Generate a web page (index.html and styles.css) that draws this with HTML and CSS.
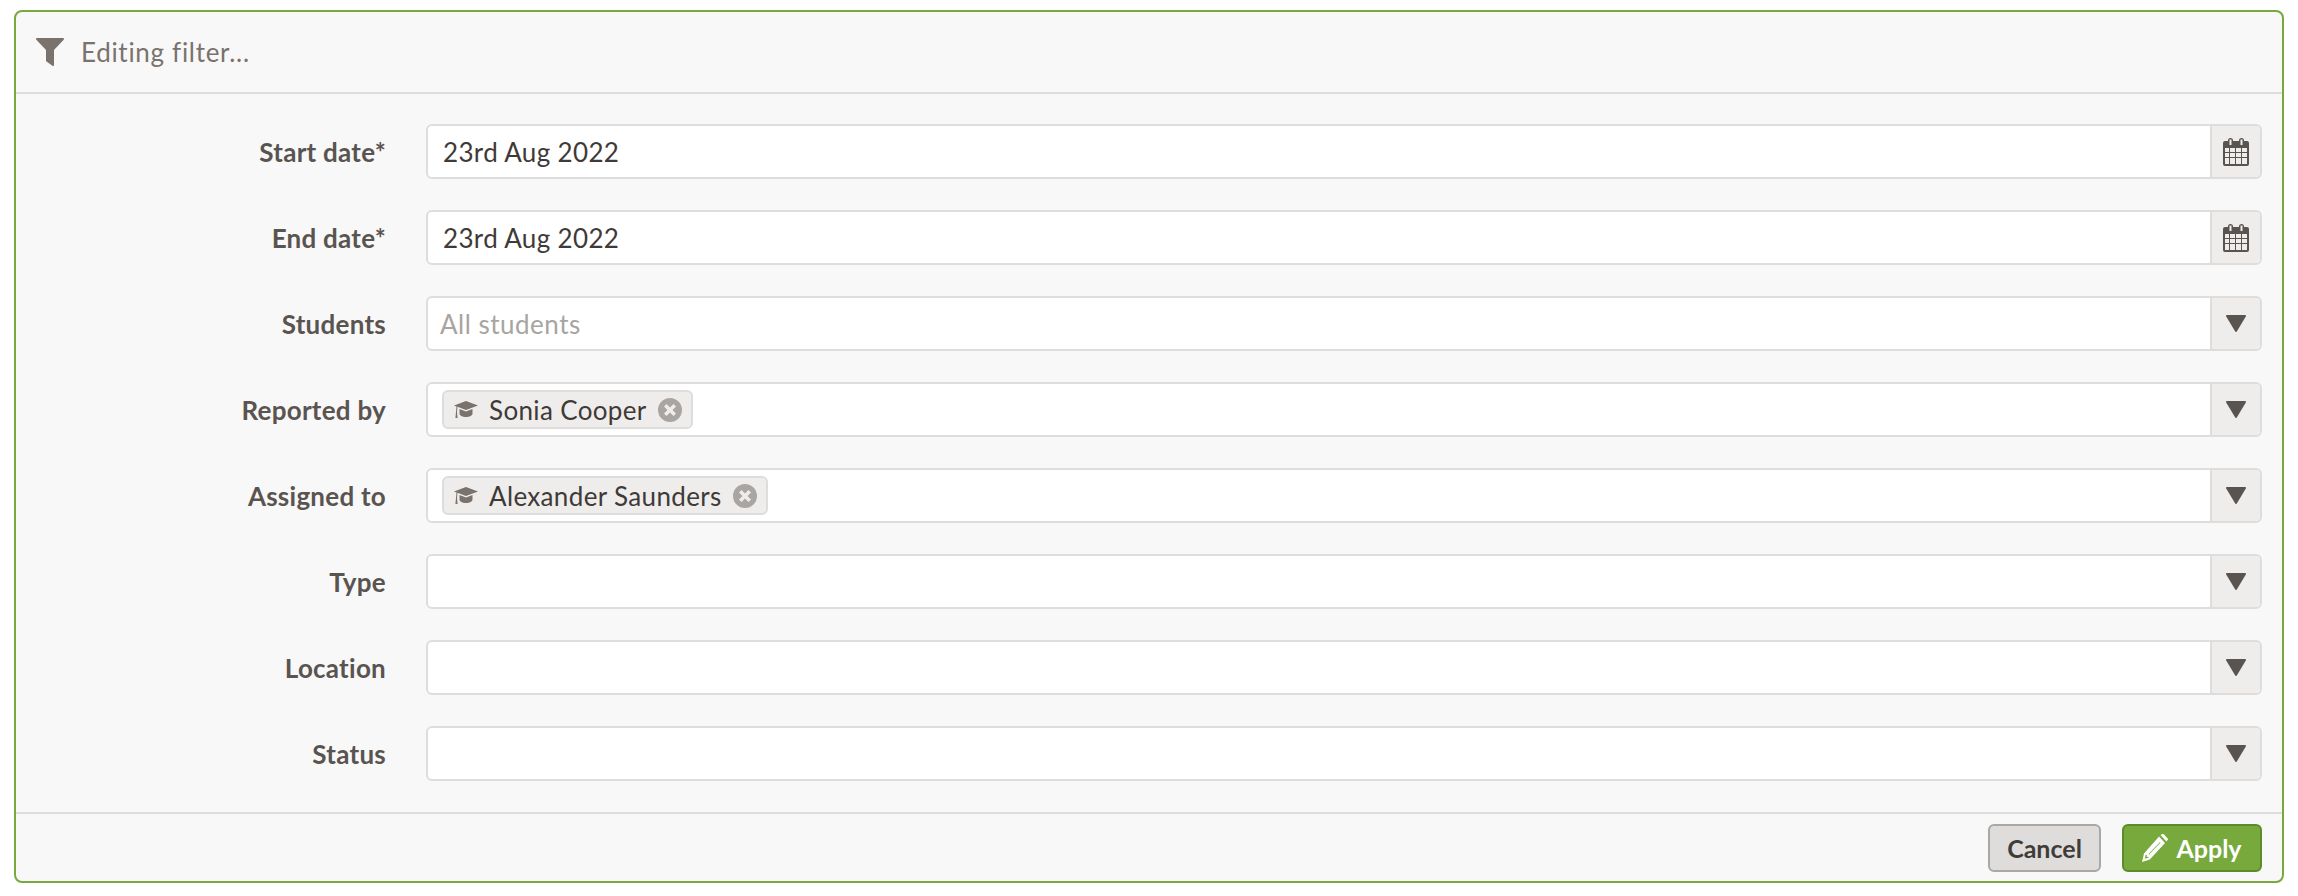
FILE: index.html
```html
<!DOCTYPE html>
<html>
	<head>
		<meta charset="utf-8" />
		<title>Editing filter</title>
		<link rel="stylesheet" href="styles.css">
	</head>
	<body>
		<svg class="defs" width="0" height="0">
			<symbol id="i-cal" viewBox="0 0 26 28">
				<path fill-rule="evenodd" d="M2 3H5V2.500a2.500 2.500 0 0 1 5 0V3H16V2.500a2.500 2.500 0 0 1 5 0V3H24a2 2 0 0 1 2 2V26a2 2 0 0 1-2 2H2a2 2 0 0 1-2-2V5a2 2 0 0 1 2-2ZM6.500 1.500V7H8.500V1.500ZM17.500 1.500V7H19.500V1.500ZM2 10V14H6V10ZM7 10V14H12V10ZM13 10V14H18V10ZM19 10V14H24V10ZM2 15V19H6V15ZM7 15V19H12V15ZM13 15V19H18V15ZM19 15V19H24V15ZM2 20V26H6V20ZM7 20V26H12V20ZM13 20V26H18V20ZM19 20V26H24V20Z"/>
			</symbol>
			<symbol id="i-down" viewBox="0 0 20 17">
				<path d="M1 0H19a1 1 0 0 1 .8 1.500L10.800 16.500a1 1 0 0 1-1.600 0L.2 1.500A1 1 0 0 1 1 0Z"/>
			</symbol>
			<symbol id="i-cap" viewBox="0 0 24 20">
				<path d="M12 1 24 5.500 12 10 3.500 6.800 3 12 3.600 18H1.400L2 12 2.500 6.400 0 5.500Z"/>
				<path d="M5.500 9 12 11.500 18.500 9V13.500C18.500 15.500 15.500 17 12 17S5.500 15.500 5.500 13.500Z"/>
			</symbol>
			<symbol id="i-x" viewBox="0 0 24 24">
				<path fill-rule="evenodd" d="M12 0a12 12 0 1 1 0 24a12 12 0 0 1 0-24ZM8.500 6 6 8.500 9.500 12 6 15.500 8.500 18 12 14.500 15.500 18 18 15.500 14.500 12 18 8.500 15.500 6 12 9.500Z"/>
			</symbol>
		</svg>
		<form class="panel">
			<div class="panel-head">
				<svg class="ico-filter" viewBox="0 0 28 28"><path d="M1 0H27a1 1 0 0 1 .7 1.700L18 12V27a1 1 0 0 1-1.600 .8L10.500 23.500a1 1 0 0 1-.5-.8V12L.3 1.700A1 1 0 0 1 1 0Z"/></svg>
				<span>Editing filter...</span>
			</div>
			<div class="panel-body">
				<div class="row">
					<label class="row-label">Start date*</label>
					<div class="field">
						<div class="field-main date">23rd Aug 2022</div>
						<div class="addon"><svg class="ico-cal"><use href="#i-cal"/></svg></div>
					</div>
				</div>
				<div class="row">
					<label class="row-label">End date*</label>
					<div class="field">
						<div class="field-main date">23rd Aug 2022</div>
						<div class="addon"><svg class="ico-cal"><use href="#i-cal"/></svg></div>
					</div>
				</div>
				<div class="row">
					<label class="row-label">Students</label>
					<div class="field">
						<div class="field-main placeholder">All students</div>
						<div class="addon"><svg class="ico-down"><use href="#i-down"/></svg></div>
					</div>
				</div>
				<div class="row">
					<label class="row-label">Reported by</label>
					<div class="field">
						<div class="field-main chips">
							<span class="chip">
								<svg class="ico-cap"><use href="#i-cap"/></svg>
								Sonia Cooper
								<svg class="ico-x"><use href="#i-x"/></svg>
							</span>
						</div>
						<div class="addon"><svg class="ico-down"><use href="#i-down"/></svg></div>
					</div>
				</div>
				<div class="row">
					<label class="row-label">Assigned to</label>
					<div class="field">
						<div class="field-main chips">
							<span class="chip">
								<svg class="ico-cap"><use href="#i-cap"/></svg>
								Alexander Saunders
								<svg class="ico-x"><use href="#i-x"/></svg>
							</span>
						</div>
						<div class="addon"><svg class="ico-down"><use href="#i-down"/></svg></div>
					</div>
				</div>
				<div class="row">
					<label class="row-label">Type</label>
					<div class="field">
						<div class="field-main"></div>
						<div class="addon"><svg class="ico-down"><use href="#i-down"/></svg></div>
					</div>
				</div>
				<div class="row">
					<label class="row-label">Location</label>
					<div class="field">
						<div class="field-main"></div>
						<div class="addon"><svg class="ico-down"><use href="#i-down"/></svg></div>
					</div>
				</div>
				<div class="row">
					<label class="row-label">Status</label>
					<div class="field">
						<div class="field-main"></div>
						<div class="addon"><svg class="ico-down"><use href="#i-down"/></svg></div>
					</div>
				</div>
			</div>
			<div class="panel-foot">
				<button type="button" class="btn btn-cancel">Cancel</button>
				<button type="button" class="btn btn-apply">
					<svg class="ico-pencil" viewBox="0 0 26 28"><path fill-rule="evenodd" d="M18.500 1 19.800.3a1.500 1.500 0 0 1 2 0L25.500 4.300a1.500 1.500 0 0 1 0 2L24.300 7.500ZM17 2.500 23 9 7.800 25.500 0 28 2 19.500ZM6.500 20 7 20.500 18.500 8.500 18 8ZM3.800 20.500 2.800 24.700 6.800 23.500 6.200 22.700 4.600 23.100 5 21.400Z"/></svg>
					Apply
				</button>
			</div>
		</form>
	</body>
</html>
```

FILE: styles.css
```css
* {
	box-sizing: border-box;
}

body {
	margin: 0;
	padding: 10px 14px 0 14px;
	background: #fff;
	font-family: Lato, "Open Sans", sans-serif;
	font-size: 26px;
	letter-spacing: 0.35px;
	color: #3f3a37;
}

.defs {
	position: absolute;
}

.panel {
	border: 2px solid #78a93c;
	border-radius: 8px;
	background: #f8f8f8;
	height: 873px;
	display: flex;
	flex-direction: column;
}

.panel-head {
	height: 82px;
	border-bottom: 2px solid #dfdddb;
	padding-left: 20px;
	display: flex;
	align-items: center;
	gap: 17px;
	letter-spacing: 0.7px;
	color: #7a726d;
}

.ico-filter {
	width: 28px;
	height: 28px;
	fill: #7a726d;
}

.panel-body {
	flex: 1;
	padding: 30px 20px 0 0;
	display: flex;
	flex-direction: column;
	gap: 31px;
}

.row {
	display: flex;
	align-items: center;
	height: 55px;
}

.row-label {
	width: 370px;
	margin-right: 40px;
	text-align: right;
	font-weight: 700;
	letter-spacing: 0.25px;
	color: #5a5450;
}

.field {
	flex: 1;
	height: 55px;
	display: flex;
	border: 2px solid #dfdddb;
	border-radius: 6px;
	background: #fff;
	overflow: hidden;
}

.field-main {
	flex: 1;
	display: flex;
	align-items: center;
}

.date {
	padding-left: 15px;
}

.placeholder {
	padding-left: 12px;
	letter-spacing: 0.5px;
	color: #a8a4a1;
}

.chips {
	padding-left: 14px;
}

.chip {
	height: 39px;
	padding: 0 9px 0 10px;
	display: inline-flex;
	align-items: center;
	gap: 11px;
	border: 2px solid #dfdddb;
	border-radius: 6px;
	background: #eeedec;
}

.ico-cap {
	width: 24px;
	height: 20px;
	fill: #7a726d;
}

.ico-x {
	width: 24px;
	height: 24px;
	fill: #a9a5a2;
}

.addon {
	width: 50px;
	display: flex;
	align-items: center;
	justify-content: center;
	border-left: 2px solid #dfdddb;
	background: #eeedec;
}

.ico-cal {
	width: 26px;
	height: 28px;
	fill: #5a5450;
}

.ico-down {
	width: 20px;
	height: 17px;
	fill: #5a5450;
}

.panel-foot {
	height: 69px;
	border-top: 2px solid #dfdddb;
	padding: 1px 20px 0 0;
	display: flex;
	align-items: center;
	justify-content: flex-end;
	gap: 21px;
}

.btn {
	height: 48px;
	border-radius: 6px;
	border: 2px solid;
	font: 700 25px Lato, "Open Sans", sans-serif;
	display: flex;
	align-items: center;
	justify-content: center;
	padding: 0;
}

.btn-cancel {
	width: 113px;
	background: #dfdddb;
	border-color: #aaa8a5;
	color: #403c3a;
}

.btn-apply {
	width: 140px;
	gap: 8px;
	background: #78a93c;
	border-color: #5c8a2c;
	color: #fff;
}

.ico-pencil {
	width: 26px;
	height: 28px;
	fill: #fff;
}
```
